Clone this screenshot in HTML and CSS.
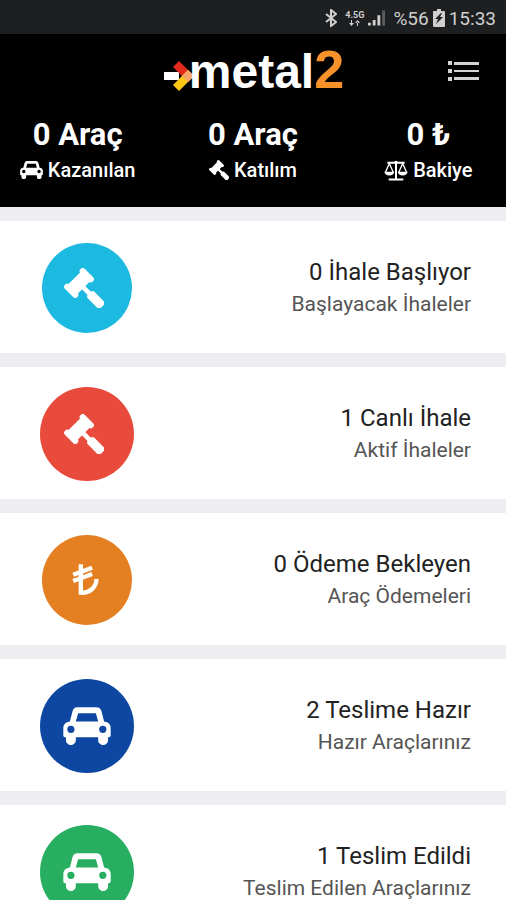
FILE: index.html
```html
<!DOCTYPE html>
<html lang="tr">
<head>
<meta charset="utf-8">
<meta name="viewport" content="width=device-width, initial-scale=1">
<title>metal2</title>
<link rel="stylesheet" href="styles.css">
</head>
<body>
<svg class="sprite" aria-hidden="true">
  <symbol id="gavel" viewBox="0 0 120 120">
    <g transform="translate(45 45) rotate(45)">
      <rect x="-26" y="-42" width="52" height="18" rx="8"/>
      <rect x="-26" y="24" width="52" height="18" rx="8"/>
      <rect x="-20" y="-30" width="40" height="60"/>
      <rect x="15" y="-7" width="35" height="14"/>
      <path d="M38 0L48-14H89Q99-14 99-4V4Q99 14 89 14H48Z"/>
    </g>
  </symbol>
  <symbol id="car" viewBox="0 0 146 114">
    <path fill-rule="evenodd" d="M44 0H101Q114 0 117 12L125 43Q145 45 145 64V86Q145 91 139 91H137V100A15 15 0 0 1 107 100V91H39V100A15 15 0 0 1 9 100V91H6Q1 91 1 86V64Q1 45 21 43L29 12Q32 0 44 0ZM46 18L39 43H107L100 18ZM24 56A11 11 0 1 0 24 78A11 11 0 1 0 24 56ZM121 56A11 11 0 1 0 121 78A11 11 0 1 0 121 56Z"/>
  </symbol>
  <symbol id="lira" viewBox="0 0 80 96">
    <path d="M26 1V86C50 88 72 72 73 45M3 32L60 11M3 51L60 30" fill="none" stroke="currentColor" stroke-width="13"/>
  </symbol>
  <symbol id="scales" viewBox="0 0 72 60">
    <path d="M10 7H62M36 2V54M14 57H58" fill="none" stroke="currentColor" stroke-width="6"/>
    <path d="M16 9L4 36M16 9L28 36M56 9L44 36M56 9L68 36" fill="none" stroke="currentColor" stroke-width="4"/>
    <path d="M1 34H31Q29 45 16 45T1 34ZM41 34H71Q69 45 56 45T41 34Z"/>
    <circle cx="36" cy="6" r="5"/>
  </symbol>
</svg>

<div class="status">
  <svg class="bluetooth" viewBox="0 0 12 18" aria-hidden="true"><path d="M1 5L11 13L6 17V1L11 5L1 13"/></svg>
  <span class="network"><span>4.5G</span>
    <svg viewBox="0 0 12 6" aria-hidden="true"><path d="M0 3H5L2.500 6ZM2 0H3V4H2ZM6 3H11L8.500 0ZM8 2H9V6H8Z"/></svg>
  </span>
  <svg class="signal" viewBox="0 0 18 16" aria-hidden="true"><path d="M0 13H3V16H0ZM5 10H8V16H5ZM10 5H13V16H10Z"/><path class="faint" d="M15 0H18V16H15Z"/></svg>
  <span>%56</span>
  <svg class="battery" viewBox="0 0 12 18" aria-hidden="true"><path fill-rule="evenodd" d="M4 0H8V2H11Q12 2 12 3V17Q12 18 11 18H1Q0 18 0 17V3Q0 2 1 2H4ZM8 4L2 10H5L3 15L10 8H7L9 4Z"/></svg>
  <span>15:33</span>
</div>

<header class="header">
  <div class="brandbar">
    <h1 class="logo">
      <svg class="arrow" viewBox="0 0 30 30" aria-hidden="true">
        <path fill="#fff" d="M0 11H15V19H0Z"/>
        <path fill="#e32a1c" d="M9 6L15 0L30 15L24 21Z"/>
        <path fill="#fbc814" d="M9 24L15 30L30 15L24 9Z"/>
        <path fill="#f7a66a" d="M18 15L24 9L30 15L24 21Z"/>
      </svg><span>metal</span><span class="two">2</span>
    </h1>
    <button class="menu" type="button" aria-label="Menü">
      <svg viewBox="0 0 31 20" aria-hidden="true"><path d="M0 0H4V4H0ZM6 1H31V4H6ZM0 8H4V12H0ZM6 9H31V11H6ZM0 16H4V20H0ZM6 16H31V19H6Z"/></svg>
    </button>
  </div>
  <div class="stats">
    <div class="stat"><strong>0 Araç</strong><span><svg class="mini-car" aria-hidden="true"><use href="#car"/></svg>Kazanılan</span></div>
    <div class="stat"><strong>0 Araç</strong><span><svg class="mini-gavel" aria-hidden="true"><use href="#gavel"/></svg>Katılım</span></div>
    <div class="stat"><strong>0 ₺</strong><span><svg class="mini-scales" aria-hidden="true"><use href="#scales"/></svg>Bakiye</span></div>
  </div>
</header>

<main class="list">
  <a class="card" href="#"><span class="disc small cyan"><svg class="gavel"><use href="#gavel"/></svg></span><span class="text"><b>0 İhale Başlıyor</b><small>Başlayacak İhaleler</small></span></a>
  <a class="card" href="#"><span class="disc red"><svg class="gavel"><use href="#gavel"/></svg></span><span class="text"><b>1 Canlı İhale</b><small>Aktif İhaleler</small></span></a>
  <a class="card" href="#"><span class="disc small orange"><svg class="lira"><use href="#lira"/></svg></span><span class="text"><b>0 Ödeme Bekleyen</b><small>Araç Ödemeleri</small></span></a>
  <a class="card" href="#"><span class="disc blue"><svg class="car"><use href="#car"/></svg></span><span class="text"><b>2 Teslime Hazır</b><small>Hazır Araçlarınız</small></span></a>
  <a class="card" href="#"><span class="disc green"><svg class="car"><use href="#car"/></svg></span><span class="text"><b>1 Teslim Edildi</b><small>Teslim Edilen Araçlarınız</small></span></a>
</main>
</body>
</html>
```
FILE: styles.css
```css
* { box-sizing: border-box; }
html { scrollbar-width: none; }
body {
  margin: 0;
  background: #ededf2;
  font-family: Roboto, "Liberation Sans", sans-serif;
  overflow-x: hidden;
}
svg { fill: currentColor; flex: none; display: block; }
.sprite { position: absolute; width: 0; height: 0; }

.status {
  display: flex;
  align-items: center;
  justify-content: flex-end;
  gap: 4px;
  height: 34px;
  padding: 2px 10px 0 0;
  background: #1d1f21;
  color: #cfcfcf;
  font-size: 19px;
}
.bluetooth { width: 12px; height: 18px; fill: none; stroke: currentColor; stroke-width: 2; margin-right: 4px; }
.network { display: flex; flex-direction: column; align-items: center; font-size: 9px; font-weight: 700; line-height: 10px; }
.network svg { width: 12px; height: 6px; }
.signal { width: 17px; height: 16px; margin-right: 4px; }
.faint { opacity: .35; }
.battery { width: 12px; height: 18px; }

.header { background: #000; color: #fff; padding-bottom: 21px; }
.brandbar {
  display: grid;
  grid-template-columns: 1fr auto 1fr;
  align-items: center;
  height: 70px;
  padding: 0 27px 0 29px;
}
.logo {
  grid-column: 2;
  display: flex;
  align-items: baseline;
  margin: 0;
  font: 700 48px/70px "Liberation Sans", Arial, sans-serif;
}
.arrow { width: 30px; height: 30px; margin-right: -5px; align-self: center; margin-top: 10px; }
.two { color: #f7922b; font-size: 54px; }
.menu { justify-self: end; padding: 0; border: 0; background: none; color: #d4d4d4; }
.menu svg { width: 31px; height: 20px; }

.stats { display: grid; grid-template-columns: repeat(3, 1fr); margin: 0 -10px; padding-top: 12px; }
.stat { display: flex; flex-direction: column; align-items: center; }
.stat strong { font-size: 31px; line-height: 38px; font-weight: 700; }
.stat span { display: flex; align-items: center; gap: 5px; font-size: 20px; line-height: 32px; font-weight: 500; }
.mini-car { width: 23px; height: 18px; }
.mini-gavel { width: 20px; height: 20px; }
.mini-scales { width: 24px; height: 21px; }

.list { display: flex; flex-direction: column; gap: 14px; padding-top: 14px; }
.card {
  display: flex;
  align-items: center;
  justify-content: space-between;
  min-height: 132px;
  padding: 2px 35px 0 40px;
  background: #fff;
  color: #222;
  text-decoration: none;
}
.disc { display: grid; place-items: center; width: 94px; height: 94px; border-radius: 50%; color: #fff; }
.small { width: 90px; height: 90px; margin: 0 2px; }
.cyan { background: #1cb9e1; }
.red { background: #e84b3c; }
.orange { background: #e47f22; }
.blue { background: #0d47a1; }
.green { background: #27ae60; }
.gavel { width: 40px; height: 40px; margin-right: 6px; }
.lira { width: 27px; height: 32px; margin-right: 4px; }
.car { width: 48px; height: 38px; }
.text { display: flex; flex-direction: column; text-align: right; }
.text b { font-size: 24px; line-height: 32px; font-weight: 400; }
.text small { font-size: 21px; line-height: 32px; font-weight: 400; color: #555; }
```
